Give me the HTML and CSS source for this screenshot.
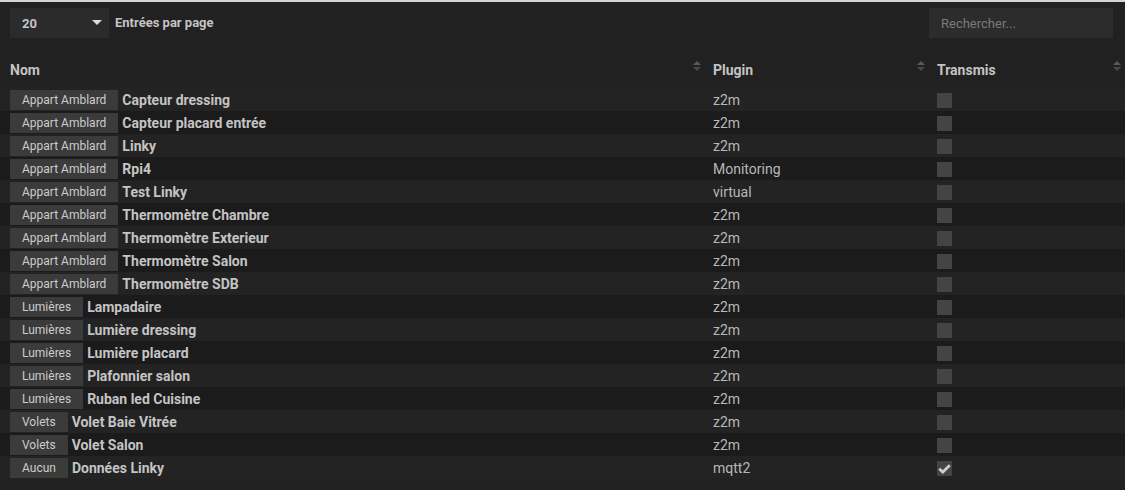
FILE: index.html
```html
<!DOCTYPE html>
<html lang="fr">
<head>
    <meta charset="UTF-8">
    <meta name="viewport" content="width=device-width, initial-scale=1.0">
    <title>Équipements</title>
    <link rel="stylesheet" href="styles.css">
</head>
<body>
    <div class="toolbar">
        <div class="length">
            <div class="length-select">20<span class="caret"></span></div>
            <span class="length-label">Entrées par page</span>
        </div>
        <input class="search" type="text" placeholder="Rechercher...">
    </div>

    <table class="eq-table">
        <thead>
            <tr>
                <th class="col-name">Nom<span class="sort"></span></th>
                <th class="col-plugin">Plugin<span class="sort"></span></th>
                <th class="col-sent">Transmis<span class="sort"></span></th>
            </tr>
        </thead>
        <tbody>
            <tr><td class="col-name"><span class="tag">Appart Amblard</span><b>Capteur dressing</b></td><td class="col-plugin">z2m</td><td class="col-sent"><span class="check"></span></td></tr>
            <tr><td class="col-name"><span class="tag">Appart Amblard</span><b>Capteur placard entrée</b></td><td class="col-plugin">z2m</td><td class="col-sent"><span class="check"></span></td></tr>
            <tr><td class="col-name"><span class="tag">Appart Amblard</span><b>Linky</b></td><td class="col-plugin">z2m</td><td class="col-sent"><span class="check"></span></td></tr>
            <tr><td class="col-name"><span class="tag">Appart Amblard</span><b>Rpi4</b></td><td class="col-plugin">Monitoring</td><td class="col-sent"><span class="check"></span></td></tr>
            <tr><td class="col-name"><span class="tag">Appart Amblard</span><b>Test Linky</b></td><td class="col-plugin">virtual</td><td class="col-sent"><span class="check"></span></td></tr>
            <tr><td class="col-name"><span class="tag">Appart Amblard</span><b>Thermomètre Chambre</b></td><td class="col-plugin">z2m</td><td class="col-sent"><span class="check"></span></td></tr>
            <tr><td class="col-name"><span class="tag">Appart Amblard</span><b>Thermomètre Exterieur</b></td><td class="col-plugin">z2m</td><td class="col-sent"><span class="check"></span></td></tr>
            <tr><td class="col-name"><span class="tag">Appart Amblard</span><b>Thermomètre Salon</b></td><td class="col-plugin">z2m</td><td class="col-sent"><span class="check"></span></td></tr>
            <tr><td class="col-name"><span class="tag">Appart Amblard</span><b>Thermomètre SDB</b></td><td class="col-plugin">z2m</td><td class="col-sent"><span class="check"></span></td></tr>
            <tr><td class="col-name"><span class="tag">Lumières</span><b>Lampadaire</b></td><td class="col-plugin">z2m</td><td class="col-sent"><span class="check"></span></td></tr>
            <tr><td class="col-name"><span class="tag">Lumières</span><b>Lumière dressing</b></td><td class="col-plugin">z2m</td><td class="col-sent"><span class="check"></span></td></tr>
            <tr><td class="col-name"><span class="tag">Lumières</span><b>Lumière placard</b></td><td class="col-plugin">z2m</td><td class="col-sent"><span class="check"></span></td></tr>
            <tr><td class="col-name"><span class="tag">Lumières</span><b>Plafonnier salon</b></td><td class="col-plugin">z2m</td><td class="col-sent"><span class="check"></span></td></tr>
            <tr><td class="col-name"><span class="tag">Lumières</span><b>Ruban led Cuisine</b></td><td class="col-plugin">z2m</td><td class="col-sent"><span class="check"></span></td></tr>
            <tr><td class="col-name"><span class="tag">Volets</span><b>Volet Baie Vitrée</b></td><td class="col-plugin">z2m</td><td class="col-sent"><span class="check"></span></td></tr>
            <tr><td class="col-name"><span class="tag">Volets</span><b>Volet Salon</b></td><td class="col-plugin">z2m</td><td class="col-sent"><span class="check"></span></td></tr>
            <tr><td class="col-name"><span class="tag">Aucun</span><b>Données Linky</b></td><td class="col-plugin">mqtt2</td><td class="col-sent"><span class="check checked"><svg viewBox="0 0 15 15" width="15" height="15"><path d="M2.2 7.8 L5.8 11 L12.8 4.2" fill="none" stroke="#cfcfcf" stroke-width="2.8"/></svg></span></td></tr>
        </tbody>
    </table>
</body>
</html>
```

FILE: styles.css
```css
html, body {
    margin: 0;
    background: #212121;
}
body {
    border-top: 2px solid #d4d4d4;
    font-family: Roboto, "Liberation Sans", sans-serif;
    font-size: 13px;
    color: #c4c4c4;
    min-height: 488px;
}
.toolbar {
    display: flex;
    justify-content: space-between;
    align-items: flex-start;
    padding: 6px 12px 0 10px;
    height: 48px;
}
.length {
    display: flex;
    align-items: center;
    gap: 6px;
}
.length-select {
    position: relative;
    width: 87px;
    height: 30px;
    line-height: 31px;
    padding-left: 12px;
    background: #2b2b2b;
    font-weight: bold;
    color: #c4c4c4;
}
.caret {
    position: absolute;
    right: 7px;
    top: 12px;
    border-left: 5px solid transparent;
    border-right: 5px solid transparent;
    border-top: 5px solid #dcdcdc;
}
.length-label {
    font-weight: bold;
    margin-top: -1px;
}
.search {
    box-sizing: border-box;
    width: 184px;
    height: 30px;
    border: none;
    outline: none;
    background: #2c2c2c;
    padding: 0 12px;
    font-family: inherit;
    font-size: 13px;
    color: #ccc;
}
.search::placeholder {
    color: #7a7a7a;
}
.eq-table {
    width: 100%;
    border-collapse: collapse;
    table-layout: fixed;
    font-size: 14px;
}
.eq-table th {
    box-sizing: border-box;
    position: relative;
    text-align: left;
    font-weight: bold;
    height: 32px;
    padding: 0 0 4px 8px;
    color: #c4c4c4;
}
.eq-table th.col-name,
.eq-table td.col-name {
    width: 705px;
    padding-left: 10px;
}
.eq-table th.col-plugin {
    width: 224px;
}
.sort {
    position: absolute;
    right: 3px;
    top: 5px;
    width: 9px;
    height: 12px;
}
.sort::before,
.sort::after {
    content: "";
    position: absolute;
    left: 0;
    border-left: 4.5px solid transparent;
    border-right: 4.5px solid transparent;
}
.sort::before {
    top: 0;
    border-bottom: 4px solid #5a5a5a;
}
.sort::after {
    top: 6px;
    border-top: 4px solid #484848;
}
.eq-table td {
    box-sizing: border-box;
    height: 23px;
    padding: 0 0 0 8px;
    white-space: nowrap;
    color: #b8b8b8;
}
.eq-table tbody tr:nth-child(odd) {
    background: #232323;
}
.eq-table tbody tr:nth-child(even) {
    background: #1b1b1b;
}
.tag {
    display: inline-block;
    height: 20px;
    line-height: 21px;
    padding: 0 12px;
    margin-right: 4px;
    background: #3b3b3b;
    font-size: 12px;
    color: #cccccc;
    vertical-align: middle;
}
.col-name b {
    vertical-align: middle;
    color: #c4c4c4;
}
.check {
    display: inline-block;
    width: 15px;
    height: 15px;
    background: #444;
    vertical-align: middle;
}
.check svg {
    display: block;
}
```
